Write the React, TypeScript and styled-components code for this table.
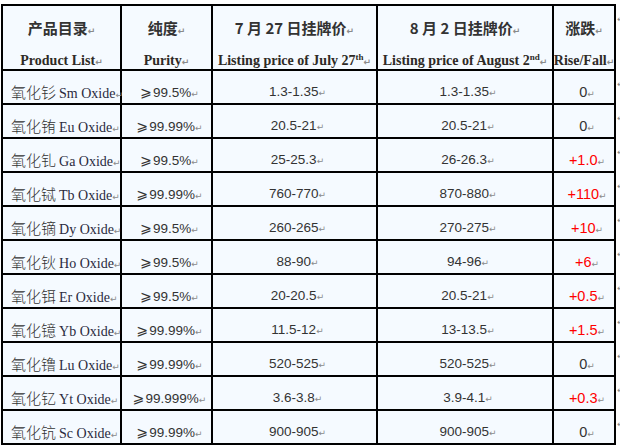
import React from 'react';
import styled, { createGlobalStyle } from 'styled-components';

const GlobalStyle = createGlobalStyle`
    html, body {
        margin: 0;
        padding: 0;
        background: #ffffff;
    }
    body {
        font-family: 'Liberation Sans', Arial, sans-serif;
        color: #333333;
    }
`;

const Page = styled.div`
    display: flex;
    align-items: flex-start;
    padding: 4px 0 0 1px;
    width: 620px;
    height: 448px;
    box-sizing: border-box;
    overflow: hidden;
`;

const Table = styled.div`
    display: grid;
    grid-template-columns: 117px 89px 163px 174px 60px;
    grid-template-rows: 63px repeat(11, 32px);
    gap: 2px;
    padding: 2px;
    background: #000000;
    flex-shrink: 0;
`;

const MarksColumn = styled.div`
    display: grid;
    grid-template-rows: 63px repeat(11, 32px);
    gap: 2px;
    padding: 2px 0 0 1px;
    width: 6px;
    overflow: hidden;
`;

const RowMark = styled.div`
    padding-top: 9px;
    font-family: 'DejaVu Sans', sans-serif;
    font-size: 9px;
    line-height: 9px;
    color: #8a8a8a;
`;

const HeadCell = styled.div`
    background: #f5faff;
    display: flex;
    flex-direction: column;
    align-items: center;
    padding-top: 12px;
`;

const HeadCn = styled.div`
    font-family: 'Noto Sans CJK SC', sans-serif;
    font-weight: 700;
    font-size: 15px;
    line-height: 20px;
    height: 20px;
    color: #333333;
    white-space: nowrap;
`;

const HeadEn = styled.div`
    margin-top: 15px;
    font-family: 'Liberation Serif', 'Times New Roman', serif;
    font-weight: 700;
    font-size: 14px;
    line-height: 16px;
    height: 16px;
    color: #2e2a26;
    white-space: nowrap;
    sup {
        font-size: 9px;
        line-height: 0;
        vertical-align: 5px;
    }
`;

const NameCell = styled.div`
    background: #f5faff;
    display: flex;
    align-items: flex-end;
    padding: 0 0 2px 8px;
    min-width: 0;
`;

const NameLine = styled.div`
    font-size: 14px;
    line-height: 18px;
    height: 18px;
    white-space: nowrap;
`;

const NameCn = styled.span`
    font-family: 'Noto Sans CJK SC', sans-serif;
    font-weight: 300;
    font-size: 15px;
    color: #333333;
`;

const NameEn = styled.span`
    font-family: 'Liberation Serif', 'Times New Roman', serif;
    font-size: 14px;
    color: #2a2a40;
    margin-left: 3px;
`;

const ValueCell = styled.div`
    background: #f5faff;
    display: flex;
    align-items: flex-end;
    justify-content: center;
    padding: 0 2px 2px 8px;
    min-width: 0;
`;

const ValueLine = styled.div<{ $tone?: 'up' | 'flat' }>`
    font-family: 'Liberation Sans', Arial, sans-serif;
    font-size: ${(p) => (p.$tone ? '14.5px' : '13.5px')};
    line-height: 18px;
    height: 18px;
    color: ${(p) => (p.$tone === 'up' ? '#ff0000' : '#333333')};
    white-space: nowrap;
`;

const Geq = styled.span`
    font-family: 'DejaVu Sans', sans-serif;
    font-size: 14px;
    margin-right: 1px;
`;

const Mark = styled.span`
    font-family: 'DejaVu Sans', sans-serif;
    font-size: 9px;
    line-height: 0;
    color: #8a8a8a;
`;

const rows = [
    ['氧化钐', 'Sm Oxide', '99.5%', '1.3-1.35', '1.3-1.35', '0'],
    ['氧化铕', 'Eu Oxide', '99.99%', '20.5-21', '20.5-21', '0'],
    ['氧化钆', 'Ga Oxide', '99.5%', '25-25.3', '26-26.3', '+1.0'],
    ['氧化铽', 'Tb Oxide', '99.99%', '760-770', '870-880', '+110'],
    ['氧化镝', 'Dy Oxide', '99.5%', '260-265', '270-275', '+10'],
    ['氧化钬', 'Ho Oxide', '99.5%', '88-90', '94-96', '+6'],
    ['氧化铒', 'Er Oxide', '99.5%', '20-20.5', '20.5-21', '+0.5'],
    ['氧化镱', 'Yb Oxide', '99.99%', '11.5-12', '13-13.5', '+1.5'],
    ['氧化镥', 'Lu Oxide', '99.99%', '520-525', '520-525', '0'],
    ['氧化钇', 'Yt Oxide', '99.999%', '3.6-3.8', '3.9-4.1', '+0.3'],
    ['氧化钪', 'Sc Oxide', '99.99%', '900-905', '900-905', '0'],
];

const P = () => <Mark>↵</Mark>;

export default function App() {
    return (
        <>
            <GlobalStyle />
            <Page>
                <Table>
                    <HeadCell>
                        <HeadCn>产品目录<P /></HeadCn>
                        <HeadEn>Product List<P /></HeadEn>
                    </HeadCell>
                    <HeadCell>
                        <HeadCn>纯度<P /></HeadCn>
                        <HeadEn>Purity<P /></HeadEn>
                    </HeadCell>
                    <HeadCell>
                        <HeadCn>7 月 27 日挂牌价<P /></HeadCn>
                        <HeadEn>
                            Listing price of July 27<sup>th</sup>
                            <P />
                        </HeadEn>
                    </HeadCell>
                    <HeadCell>
                        <HeadCn>8 月 2 日挂牌价<P /></HeadCn>
                        <HeadEn>
                            Listing price of August 2<sup>nd</sup>
                            <P />
                        </HeadEn>
                    </HeadCell>
                    <HeadCell>
                        <HeadCn>涨跌<P /></HeadCn>
                        <HeadEn>Rise/Fall<P /></HeadEn>
                    </HeadCell>
                    {rows.map((r, i) => {
                        const tone = r[5].startsWith('+') ? 'up' : 'flat';
                        return (
                            <React.Fragment key={i}>
                                <NameCell>
                                    <NameLine>
                                        <NameCn>{r[0]}</NameCn>
                                        <NameEn>{r[1]}</NameEn>
                                        <P />
                                    </NameLine>
                                </NameCell>
                                <ValueCell>
                                    <ValueLine>
                                        <Geq>⩾</Geq>
                                        {r[2]}
                                        <P />
                                    </ValueLine>
                                </ValueCell>
                                <ValueCell>
                                    <ValueLine>
                                        {r[3]}
                                        <P />
                                    </ValueLine>
                                </ValueCell>
                                <ValueCell>
                                    <ValueLine>
                                        {r[4]}
                                        <P />
                                    </ValueLine>
                                </ValueCell>
                                <ValueCell>
                                    <ValueLine $tone={tone}>
                                        {r[5]}
                                        <P />
                                    </ValueLine>
                                </ValueCell>
                            </React.Fragment>
                        );
                    })}
                </Table>
                <MarksColumn>
                    {Array.from({ length: 12 }).map((_, i) => (
                        <RowMark key={i}>↵</RowMark>
                    ))}
                </MarksColumn>
            </Page>
        </>
    );
}
